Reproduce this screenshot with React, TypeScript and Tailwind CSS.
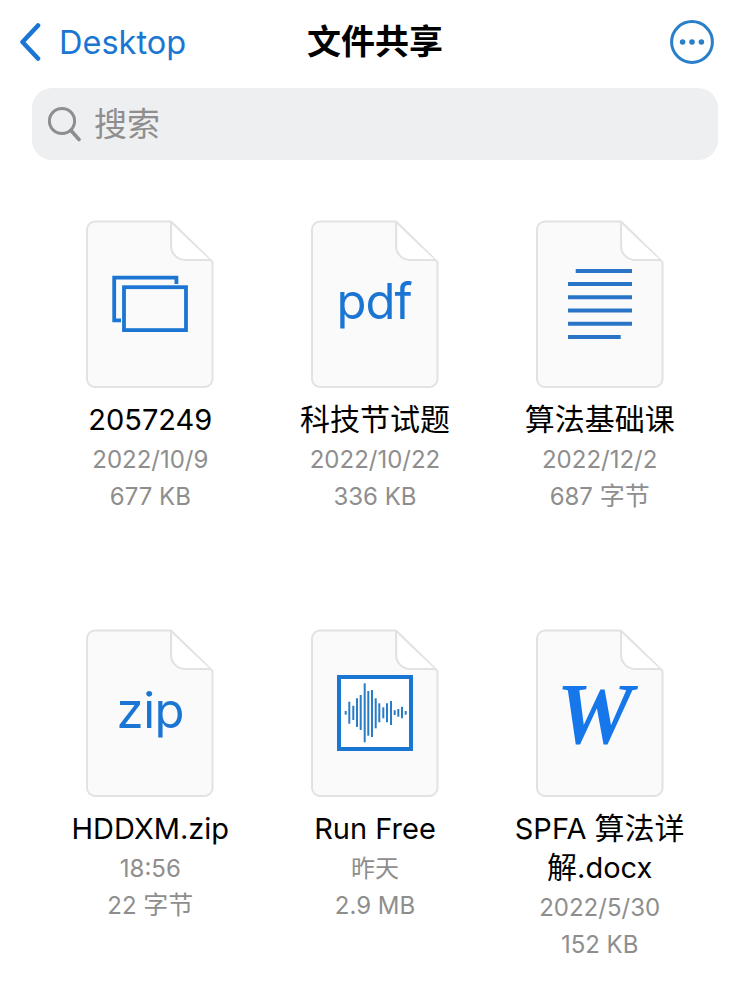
import React from 'react';

const BLUE = '#1b76d3';

const bars: [number, number, number][] = [
  [345.7, 711, 714.7],
  [349.3, 701.7, 723.7],
  [353.3, 705.7, 720],
  [357, 698.3, 727],
  [360.7, 695, 730],
  [364.7, 683.3, 742.3],
  [368.3, 691, 735.7],
  [372, 690, 737],
  [375.7, 698.3, 728.3],
  [379.3, 703.3, 722.3],
  [383.3, 707.3, 718.3],
  [387, 703.3, 722.3],
  [391, 701, 725],
  [394.7, 710.3, 715],
  [398.3, 709, 716.7],
  [402, 706.7, 718.3],
  [405.7, 711, 714.7],
];

const DocIcon: React.FC<{ children?: React.ReactNode }> = ({ children }) => (
  <div className="relative w-[128px] h-[168px] shrink-0">
    <svg width="128" height="168" viewBox="0 0 128 168" fill="none">
      <path
        d="M9 1.5 H84.5 L126.5 42 V159 a8 8 0 0 1 -8 8 H9 a8 8 0 0 1 -8 -8 V9.5 a8 8 0 0 1 8 -8 Z"
        fill="#fafafb"
      />
      <path
        d="M85 1.5 H9 a8 8 0 0 0 -8 8 V159 a8 8 0 0 0 8 8 H118.5 a8 8 0 0 0 8 -8 V42 L85 1.5 V26 a14 14 0 0 0 14 14 H125"
        stroke="#e2e2e3"
        strokeWidth="2"
        strokeLinejoin="round"
      />
      <path d="M87 6 L123 39 H99 a13 13 0 0 1 -12 -13 Z" fill="#ffffff" />
    </svg>
    {children}
  </div>
);

// the glyph drawings sit on top of the sheet, coords are relative to the page
const StackIcon = () => (
  <svg className="absolute left-0 top-0" width="128" height="168" viewBox="86 220 128 168" fill="none">
    <path d="M121 320.4 H114.2 V277.6 H176.4 V284" stroke={BLUE} strokeWidth="3.8" />
    <rect x="124" y="287.2" width="62" height="42.9" stroke={BLUE} strokeWidth="3.8" />
  </svg>
);

const LinesIcon = () => (
  <svg className="absolute left-0 top-0" width="128" height="168" viewBox="536 220 128 168" fill="none">
    <g stroke="#2a74c8" strokeWidth="4">
      <path d="M575.7 271 H632" />
      <path d="M568 284 H632" />
      <path d="M568 297.3 H632" />
      <path d="M568 310.5 H632" />
      <path d="M568 323.7 H632" />
      <path d="M568 337 H620.7" />
    </g>
  </svg>
);

const WaveIcon = () => (
  <svg className="absolute left-0 top-0" width="128" height="168" viewBox="311 629 128 168" fill="none">
    <rect x="339" y="677" width="72" height="72" stroke={BLUE} strokeWidth="4" fill="#ffffff" />
    <g stroke="#2a7cc6" strokeWidth="2">
      {bars.map(([x, y1, y2]) => (
        <path key={x} d={`M${x} ${y1} V${y2}`} />
      ))}
    </g>
  </svg>
);

type FileItem = {
  id: string;
  name: React.ReactNode;
  date: string;
  size: React.ReactNode;
  icon: React.ReactNode;
};

// Han glyphs run larger than the latin text next to them
const Han: React.FC<{ children: React.ReactNode }> = ({ children }) => (
  <span className="inline-block text-[30px] leading-[39px]">{children}</span>
);

const HanMeta: React.FC<{ children: React.ReactNode }> = ({ children }) => (
  <span className="inline-block text-[25px] leading-[33px]">{children}</span>
);

const files: FileItem[] = [
  { id: 'a', name: '2057249', date: '2022/10/9', size: '677 KB', icon: <StackIcon /> },
  {
    id: 'b',
    name: <Han>科技节试题</Han>,
    date: '2022/10/22',
    size: '336 KB',
    icon: (
      <div className="absolute left-0 right-[2px] top-[50px] text-center text-[49px] leading-[64px] tracking-[-1px] text-[#1b76d3]">
        pdf
      </div>
    ),
  },
  {
    id: 'c',
    name: <Han>算法基础课</Han>,
    date: '2022/12/2',
    size: (
      <>
        687 <HanMeta>字节</HanMeta>
      </>
    ),
    icon: <LinesIcon />,
  },
  {
    id: 'd',
    name: 'HDDXM.zip',
    date: '18:56',
    size: (
      <>
        22 <HanMeta>字节</HanMeta>
      </>
    ),
    icon: (
      <div className="absolute left-0 right-0 top-[50px] text-center text-[49px] leading-[64px] tracking-[-0.5px] text-[#1b76d3]">
        zip
      </div>
    ),
  },
  { id: 'e', name: 'Run Free', date: '昨天', size: '2.9 MB', icon: <WaveIcon /> },
  {
    id: 'f',
    name: (
      <>
        SPFA <Han>算法详</Han> <Han>解</Han>.docx
      </>
    ),
    date: '2022/5/30',
    size: '152 KB',
    icon: (
      <div className="absolute left-0 right-[10px] top-[35px] text-center text-[86px] leading-[100px] font-bold italic text-[#1577ea] font-['Liberation_Serif',serif]">
        W
      </div>
    ),
  },
];

const App: React.FC = () => {
  return (
    <div className="w-[750px] h-[989px] bg-white overflow-hidden font-['Inter','Noto_Sans_CJK_SC',sans-serif]">
      <header className="relative flex items-center justify-between h-[88px] pl-[19px] pr-[36px] pb-[4px]">
        <div className="flex items-center gap-[18px] text-[#1b76d3]">
          <svg width="22" height="38" viewBox="0 0 22 38" fill="none">
            <path d="M19 2.5 L3.5 19 L19 35.5" stroke="#1b76d3" strokeWidth="4.6" strokeLinecap="round" strokeLinejoin="round" />
          </svg>
          <span className="text-[32.5px] leading-[40px] pt-[1px]">Desktop</span>
        </div>
        <h1 className="absolute left-0 right-0 top-[20px] text-center text-[34px] leading-[44px] font-bold text-black">
          文件共享
        </h1>
        <svg width="44" height="44" viewBox="0 0 44 44" fill="none">
          <circle cx="22" cy="22" r="20.4" stroke="#2a7fc9" strokeWidth="3" />
          <circle cx="12.6" cy="22" r="2.8" fill="#2a7fc9" />
          <circle cx="22" cy="22" r="2.8" fill="#2a7fc9" />
          <circle cx="31.4" cy="22" r="2.8" fill="#2a7fc9" />
        </svg>
      </header>

      <div className="mx-[32px] w-[686px] h-[72px] rounded-[20px] bg-[#eeeff1] flex items-center pl-[15px] gap-[13px]">
        <svg width="34" height="36" viewBox="0 0 34 36" fill="none">
          <circle cx="15" cy="15" r="12.6" stroke="#8e8e8e" strokeWidth="3" />
          <path d="M24 24.5 L32 33.5" stroke="#8e8e8e" strokeWidth="3.6" strokeLinecap="round" />
        </svg>
        <span className="text-[33px] leading-none text-[#8e8e8e]">搜索</span>
      </div>

      <main className="grid grid-cols-3 auto-rows-[409px] px-[38px] pt-[60px]">
        {files.map((file) => (
          <div key={file.id} className="flex flex-col items-center">
            <DocIcon>{file.icon}</DocIcon>
            <div className="mt-[12px] w-[180px] text-center text-[29px] leading-[39px] text-black">
              {file.name}
            </div>
            <div className="h-[41px] text-center text-[24px] leading-[41px] text-[#8e8e8e]">{file.date}</div>
            <div className="h-[33px] text-center text-[24px] leading-[33px] text-[#8e8e8e]">{file.size}</div>
          </div>
        ))}
      </main>
    </div>
  );
};

export default App;
